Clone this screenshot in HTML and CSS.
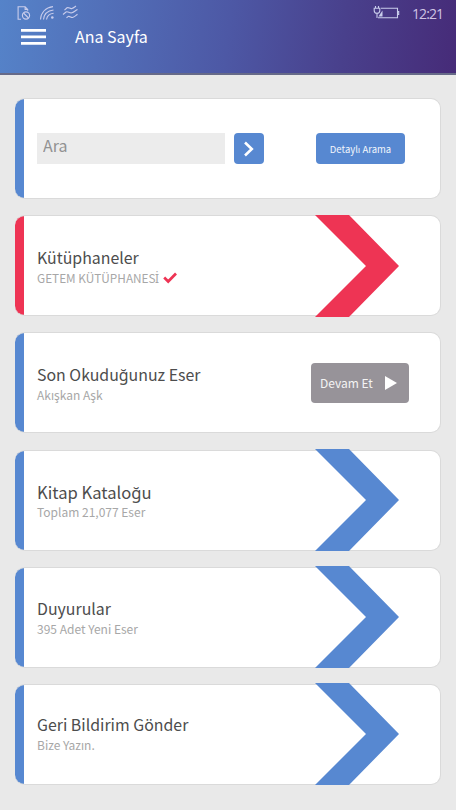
FILE: index.html
```html
<!DOCTYPE html>
<html lang="tr">
<head>
<meta charset="utf-8">
<title>Ana Sayfa</title>
<link rel="stylesheet" href="styles.css">
</head>
<body>
<header class="header">
  <div class="status">
    <svg class="status-left" width="64" height="18" viewBox="0 0 64 18" fill="none" stroke="currentColor" stroke-width="1.1">
      <path d="M6 14.300H3.100V1.700h7l2.600 2.700v1.400M10.100 1.700v2.700h2.600"/>
      <circle cx="11" cy="10.500" r="3.600"/><path d="M8.500 8l5 5"/>
      <path d="M25.5 14.500C26 7.600 30.500 2.500 38 1.600M28.500 14.500C29 9.500 32.500 5.700 38.500 5M31.500 14.500C32 11.500 34.500 8.800 38.600 8.300"/>
      <circle cx="37.300" cy="12.500" r="1.300" fill="currentColor" stroke="none"/>
      <path d="M49.500 5.200l2.500-2.400c2-1 3 1.500 5 .700 2-.800 2.500-1.600 4-2.500M48 9.500l3-2.500c2-1 3.500 1.500 6 .700 2-.700 3.500-2.200 5.500-3.200M51.500 12.800l1.500-1.200c2-1 3 1.500 5 .700 2-.800 3-2.100 4.500-3.100"/>
    </svg>
    <svg class="battery" width="28" height="16" viewBox="0 0 28 16" fill="none" stroke="currentColor" stroke-width="1.100">
      <path d="M8 3.200h16.500v9.500H5M24.500 6.500h1.200v3h-1.200"/>
      <path d="M2.500 1v2.200M5.500 1v2.200M1.200 3.200h5.600v2.200a2.800 2.800 0 0 1-5.600 0zM4 8v5"/>
      <path d="M5.500 11.500L9.500 5.500v6z" fill="currentColor" stroke="none"/>
    </svg>
    <span class="clock">12:21</span>
  </div>
  <div class="bar">
    <svg class="menu" width="25" height="16" viewBox="0 0 25 16" fill="#fff"><path d="M0 0h25v2.700H0zM0 6.500h25v2.700H0zM0 13h25v2.700H0z"/></svg>
    <h1 class="page-title">Ana Sayfa</h1>
  </div>
</header>
<main class="cards">
  <section class="card card-search">
    <input class="search" type="text" placeholder="Ara">
    <button class="go"><svg width="12" height="16" viewBox="0 0 12 16" fill="none" stroke="#fff" stroke-width="2.600"><path d="M2 1.500L8.800 8 2 14.500"/></svg></button>
    <button class="advanced">Detaylı Arama</button>
  </section>
  <section class="card card-red">
    <div class="text text-low"><h2>Kütüphaneler</h2><p class="library"><span>GETEM KÜTÜPHANES<span class="dotted">İ</span></span><svg class="check" width="14" height="12" viewBox="0 0 14 12" fill="none" stroke="#ee3454" stroke-width="2.700"><path d="M1.200 5.500l4 4L13 1.500"/></svg></p></div>
    <svg class="arrow" width="84" height="102" viewBox="0 0 84 102" fill="currentColor"><path d="M0 0h34l50 51-50 51H0l51-51z"/></svg>
  </section>
  <section class="card">
    <div class="text text-low"><h2>Son Okuduğunuz Eser</h2><p>Akışkan Aşk</p></div>
    <button class="resume">Devam Et<svg width="12" height="14" viewBox="0 0 12 14" fill="#fff"><path d="M0 0l12 7-12 7z"/></svg></button>
  </section>
  <section class="card">
    <div class="text"><h2 class="catalog">Kitap Kataloğu</h2><p>Toplam 21,077 Eser</p></div>
    <svg class="arrow" width="84" height="102" viewBox="0 0 84 102" fill="currentColor"><path d="M0 0h34l50 51-50 51H0l51-51z"/></svg>
  </section>
  <section class="card">
    <div class="text"><h2>Duyurular</h2><p>395 Adet Yeni Eser</p></div>
    <svg class="arrow" width="84" height="102" viewBox="0 0 84 102" fill="currentColor"><path d="M0 0h34l50 51-50 51H0l51-51z"/></svg>
  </section>
  <section class="card">
    <div class="text text-high"><h2>Geri Bildirim Gönder</h2><p>Bize Yazın.</p></div>
    <svg class="arrow" width="84" height="102" viewBox="0 0 84 102" fill="currentColor"><path d="M0 0h34l50 51-50 51H0l51-51z"/></svg>
  </section>
</main>
</body>
</html>
```
FILE: styles.css
```css
* { box-sizing: border-box; }
body {
  margin: 0;
  height: 810px;
  overflow: hidden;
  background: #e9e9e9;
  font-family: "Noto Sans CJK SC", "Noto Sans", sans-serif;
}
h1, h2, p { margin: 0; font-weight: 400; }
button, input { border: 0; padding: 0; font-family: inherit; }
svg { display: block; flex: none; }
.header {
  height: 75px;
  background: linear-gradient(97deg, #5583c9 0%, #5270b9 22%, #4d58a5 50%, #49408c 75%, #462b78 100%);
  border-bottom: 2px solid #666a88;
  color: #fff;
}
.status {
  display: flex;
  height: 26px;
  padding: 5px 14px 0 15px;
  color: #c9cdec;
}
.battery { margin-left: auto; }
.clock {
  width: 30px;
  margin-left: 11px;
  font: 400 14px/17px "Open Sans", sans-serif;
  letter-spacing: -0.9px;
  white-space: nowrap;
  color: #cfc4e4;
}
.bar { display: flex; align-items: center; height: 22px; padding-left: 21px; }
.page-title { margin-left: 29px; padding-bottom: 2px; font-size: 16px; line-height: 20px; }
.cards {
  display: grid;
  grid-auto-rows: 101px;
  row-gap: 16.200px;
  padding: 23px 15px 0;
}
.card {
  display: flex;
  align-items: center;
  color: #5788d1;
  border: 1px solid #dadada;
  border-left: 0;
  border-radius: 10px;
  background: linear-gradient(90deg, #5788d1 9px, #fff 9px);
  padding-left: 22px;
}
.card-red { color: #ee3454; background: linear-gradient(90deg, #ee3454 9px, #fff 9px); }
.text { width: 278px; padding-top: 3px; }
.text-low { padding-top: 4.500px; }
.text-high { padding-top: 2px; }
.text h2 { font-size: 15.900px; line-height: 20px; color: #4d4d4d; }
.text .catalog { font-size: 16.600px; }
.text p { display: flex; align-items: center; font-size: 12px; line-height: 20px; color: #a7a7a7; }
.text .library { height: 20px; font-size: 11.800px; }
.dotted { font-family: "Noto Sans", sans-serif; line-height: 1; margin-left: -0.5px; }
.check { margin-left: 4px; }
.arrow { margin: -1px 0; }
.search {
  width: 188px;
  height: 31px;
  padding: 0 6px 7px;
  background: #ececec;
  font-size: 16px;
}
.search::placeholder { color: #929292; }
.go {
  display: grid;
  place-items: center;
  width: 30px;
  height: 31px;
  margin-left: 9px;
  background: #5788d1;
  border-radius: 4px;
}
.advanced {
  width: 89px;
  height: 31px;
  margin-left: 52px;
  background: #5788d1;
  border-radius: 4px;
  color: #f2f6fc;
  font-size: 9.500px;
}
.resume {
  display: flex;
  align-items: center;
  justify-content: space-between;
  width: 98px;
  height: 40px;
  margin-left: -4px;
  padding: 0 12px 0 9px;
  background: #979399;
  border-radius: 4px;
  color: #f4f4f4;
  font-size: 12px;
}
```
